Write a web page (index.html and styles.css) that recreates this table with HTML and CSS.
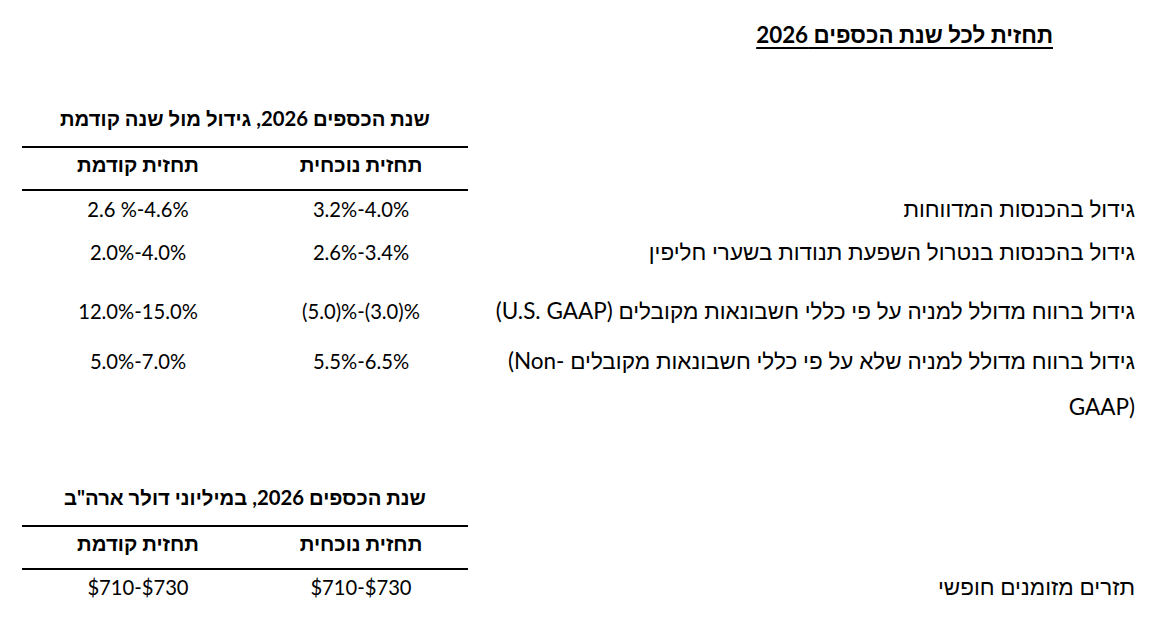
FILE: index.html
```html
<!DOCTYPE html>
<html lang="he" dir="rtl">
<head>
<meta charset="utf-8">
<title>תחזית לכל שנת הכספים 2026</title>
<link rel="stylesheet" href="styles.css">
</head>
<body>
<div class="page">
  <h1 class="title">תחזית לכל שנת הכספים 2026</h1>

  <section class="block block-growth">
    <div class="row row-caption">
      <div class="label"></div>
      <div class="caption">שנת הכספים 2026, גידול מול שנה קודמת</div>
    </div>
    <div class="row row-head">
      <div class="label"></div>
      <div class="head">תחזית נוכחית</div>
      <div class="head">תחזית קודמת</div>
    </div>
    <div class="row row-d1">
      <div class="label">גידול בהכנסות המדווחות</div>
      <div class="val">3.2%-4.0%</div>
      <div class="val">2.6 %-4.6%</div>
    </div>
    <div class="row row-d2">
      <div class="label">גידול בהכנסות בנטרול השפעת תנודות בשערי חליפין</div>
      <div class="val">2.6%-3.4%</div>
      <div class="val">2.0%-4.0%</div>
    </div>
    <div class="row row-d3">
      <div class="label">גידול ברווח מדולל למניה על פי כללי חשבונאות מקובלים <bdi dir="ltr">(U.S. GAAP)</bdi></div>
      <div class="val">(5.0)%-(3.0)%</div>
      <div class="val">12.0%-15.0%</div>
    </div>
    <div class="row row-d4">
      <div class="label">גידול ברווח מדולל למניה שלא על פי כללי חשבונאות מקובלים <bdi dir="ltr">(Non-</bdi><br><bdi dir="ltr">GAAP)</bdi></div>
      <div class="val">5.5%-6.5%</div>
      <div class="val">5.0%-7.0%</div>
    </div>
  </section>

  <section class="block block-cash">
    <div class="row row-caption">
      <div class="label"></div>
      <div class="caption">שנת הכספים 2026, במיליוני דולר ארה"ב</div>
    </div>
    <div class="row row-head">
      <div class="label"></div>
      <div class="head">תחזית נוכחית</div>
      <div class="head">תחזית קודמת</div>
    </div>
    <div class="row row-d5">
      <div class="label">תזרים מזומנים חופשי</div>
      <div class="val">$710-$730</div>
      <div class="val">$710-$730</div>
    </div>
  </section>
</div>
</body>
</html>
```

FILE: styles.css
```css
html, body {
  margin: 0;
  padding: 0;
  background: #ffffff;
}

body {
  color: #000000;
  font-family: Lato, "Liberation Sans", sans-serif;
  width: 1166px;
  height: 630px;
  overflow: hidden;
}

.page {
  padding: 0 31px 0 22px;
}

.title {
  margin: 0;
  padding: 20px 82px 0 0;
  font-size: 22.4px;
  line-height: 30px;
  font-weight: 700;
  text-decoration: underline;
  text-decoration-thickness: 2px;
  text-underline-offset: 4px;
}

.row {
  display: grid;
  grid-template-columns: 667px 214px 232px;
  align-items: start;
}

.label {
  font-size: 22.5px;
  line-height: 30px;
  text-align: right;
}

.caption {
  grid-column: 2 / 4;
  text-align: center;
  font-size: 20.3px;
  font-weight: 700;
  line-height: 30px;
  padding-bottom: 13px;
}

.head {
  text-align: center;
  font-size: 20.4px;
  font-weight: 700;
  line-height: 32px;
  border-top: 2px solid #000;
  border-bottom: 2px solid #000;
  padding-bottom: 9px;
}

.val {
  direction: ltr;
  unicode-bidi: isolate;
  text-align: center;
  font-size: 20.2px;
  line-height: 30px;
}

.block-growth .row-caption { padding-top: 53px; }
.row-d1 { padding-top: 3px; }
.row-d2 { padding-top: 13px; }
.row-d3 { padding-top: 29px; }
.row-d4 { padding-top: 12px; }
.row-d4 .label,
.row-d4 .val { line-height: 46px; }

.block-cash .row-caption { padding-top: 52px; }
.row-d5 { padding-top: 2px; }
```
